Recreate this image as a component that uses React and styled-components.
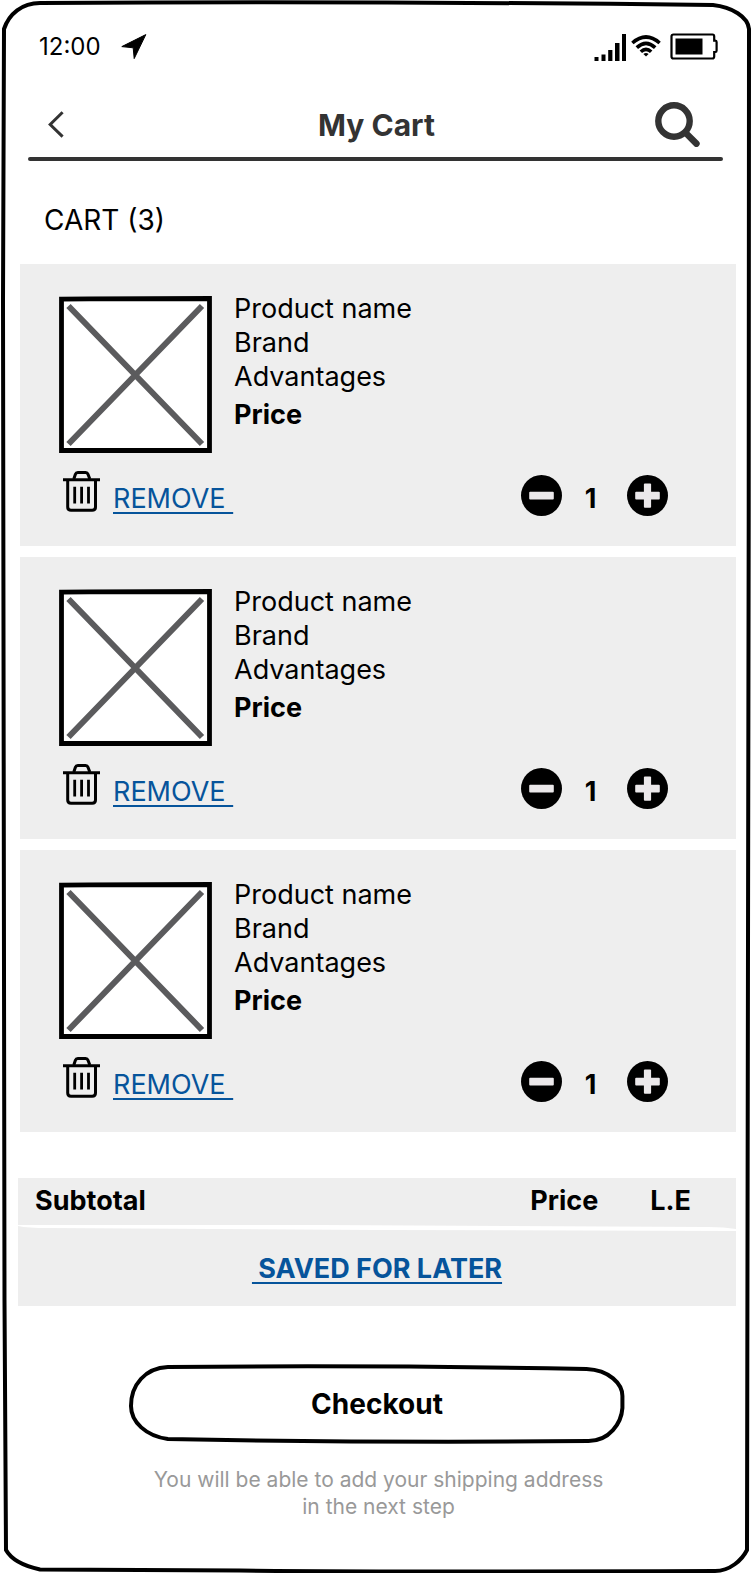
import React, { useState } from "react";
import styled, { createGlobalStyle } from "styled-components";

const ink = "#000";
const softInk = "#333";
const panel = "#eeeeee";
const linkBlue = "#06549b";

const GlobalStyle = createGlobalStyle`
  *, *::before, *::after { box-sizing: border-box; }
  body {
    margin: 0;
    background: #fff;
    color: ${ink};
    font-family: Inter, "Liberation Sans", sans-serif;
    font-size: 27px;
    line-height: 34px;
  }
  svg { display: block; flex: none; }
`;

const Phone = styled.div`
  position: relative;
  display: flex;
  flex-direction: column;
  min-height: 100vh;
  padding: 32px 17px 53px 18px;
`;

const Outline = styled.svg`
  position: absolute;
  inset: 0;
  width: 100%;
  height: 100%;
  overflow: visible;
  pointer-events: none;
  fill: none;
  stroke: ${ink};
  stroke-width: 4px;
  path { vector-effect: non-scaling-stroke; }
`;

const StatusBar = styled.div`
  display: flex;
  align-items: center;
  justify-content: space-between;
  height: 29px;
  padding: 0 18px 0 21px;
  font-size: 24px;
`;

const StatusGroup = styled.div`
  display: flex;
  align-items: center;
  gap: ${(p) => p.$gap}px;
`;

const Header = styled.header`
  display: grid;
  grid-template-columns: 1fr auto 1fr;
  align-items: center;
  margin: 36px 13px 0 10px;
  height: 54px;
  color: ${softInk};
`;

const Title = styled.h1`
  margin: 0;
  padding: 2px 0 0 2px;
  font-size: 30px;
  font-weight: 700;
`;

const IconButton = styled.button`
  display: block;
  padding: 0;
  border: 0;
  background: none;
  color: inherit;
  cursor: pointer;
`;

const BackButton = styled(IconButton)`
  justify-self: start;
  margin-left: 20px;
`;

const SearchButton = styled(IconButton)`
  justify-self: end;
  margin-right: 23px;
`;

const HeaderRule = styled.hr`
  width: auto;
  height: 4px;
  margin: 6px 13px 0 10px;
  border: 0;
  border-radius: 2px;
  background: ${softInk};
`;

const CartHeading = styled.h2`
  margin: 42px 0 27px 26px;
  font-size: 28px;
  font-weight: 400;
`;

const CartList = styled.ul`
  display: flex;
  flex-direction: column;
  gap: 11px;
  margin: 0 0 0 2px;
  padding: 0;
  list-style: none;
`;

const CartCard = styled.li`
  padding: 28px 68px 30px 39px;
  background: ${panel};
`;

const ProductRow = styled.div`
  display: flex;
  gap: 22px;
`;

const Details = styled.div`
  p { margin: 0; }
`;

const Price = styled.strong`
  display: block;
  margin-top: 4px;
  font-weight: 700;
`;

const Thumbnail = styled.svg`
  margin-top: 4px;
`;

const ActionRow = styled.div`
  display: flex;
  align-items: flex-end;
  justify-content: space-between;
  height: 45px;
  margin-top: 18px;
`;

const RemoveGroup = styled.div`
  display: flex;
  align-items: flex-end;
  gap: 13px;
  margin-left: 4px;
  svg { margin-bottom: 4px; }
`;

const TextLink = styled.a`
  color: ${linkBlue};
  font-weight: ${(p) => (p.$bold ? 700 : 400)};
  text-decoration: underline;
  text-decoration-thickness: 2px;
  text-underline-offset: 4px;
  text-decoration-skip-ink: none;
`;

const Stepper = styled.div`
  display: flex;
  align-items: flex-end;
`;

const Quantity = styled.output`
  width: 65px;
  padding-right: 8px;
  font-weight: 700;
  text-align: center;
`;

const Summary = styled.section`
  margin-top: 46px;
  background: ${panel};
`;

const SubtotalRow = styled.div`
  display: flex;
  align-items: center;
  gap: 52px;
  height: 46px;
  padding: 0 45px 0 17px;
  font-weight: 700;
`;

const SubtotalLabel = styled.span`
  flex: 1;
`;

const SummaryRule = styled.svg`
  width: 100%;
  height: 8px;
  fill: #fff;
`;

const SavedRow = styled.div`
  display: flex;
  align-items: center;
  justify-content: center;
  height: 74px;
`;

const CheckoutButton = styled.button`
  position: relative;
  align-self: center;
  width: 69%;
  height: 79px;
  margin-top: 59px;
  padding: 0 0 2px;
  border: 0;
  background: none;
  color: ${ink};
  font: 700 28px/34px Inter, "Liberation Sans", sans-serif;
  cursor: pointer;
`;

const HelperText = styled.p`
  margin: 22px 0 0;
  padding-left: 3px;
  color: #999;
  font-size: 21px;
  line-height: 27px;
  text-align: center;
`;

const LocationIcon = () => (
  <svg width="26" height="26" viewBox="0 0 26 26" aria-hidden="true">
    <path d="M24.8 0.6 L13.2 24.6 L12.2 13.8 L0.8 12.6 Z" fill={ink} stroke={ink} strokeLinejoin="round" />
  </svg>
);

const SignalIcon = () => (
  <svg width="33" height="28" viewBox="0 0 33 28" aria-hidden="true">
    <path d="M0.500 24h4v4h-4z M7.500 21.500h4v6.500h-4z M14.200 17h4.200v11h-4.200z M21 10h4.500v18h-4.500z M28 1h4v27h-4z" fill={ink} />
  </svg>
);

const WifiIcon = () => (
  <svg width="30" height="28" viewBox="0 0 30 28" fill="none" stroke={ink} strokeWidth="3.600" aria-hidden="true">
    <path d="M1.400 10 Q15 -2 28.600 10" />
    <path d="M5.800 14.600 Q15 6 24.200 14.600" />
    <path d="M9.800 18.800 Q15 14 20.200 18.800" />
    <path d="M12.400 21 Q15 19 17.600 21 L15 23.600 Z" fill={ink} stroke="none" />
  </svg>
);

const BatteryIcon = () => (
  <svg width="48" height="27" viewBox="0 0 48 27" aria-hidden="true">
    <path
      d="M3.500 1.500 H42.500 Q44.200 1.500 44.200 3.500 V7.600 H45.400 Q46.600 7.600 46.600 9 V17.500 Q46.600 19 45.400 19 H44.200 V23.500 Q44.200 25.500 42.200 25.500 H3.500 Q1.500 25.500 1.500 23.500 V3.500 Q1.500 1.500 3.500 1.500"
      fill="none"
      stroke={ink}
      strokeWidth="2.200"
    />
    <rect x="5.500" y="5.500" width="27" height="16" fill={ink} />
  </svg>
);

const BackIcon = () => (
  <svg width="16" height="27" viewBox="0 0 16 27" fill="none" stroke="currentColor" strokeWidth="3" aria-hidden="true">
    <path d="M14.600 1.200 L2.200 13.500 L14.600 25.600" />
  </svg>
);

const SearchIcon = () => (
  <svg width="45" height="45" viewBox="0 0 45 45" fill="none" stroke="currentColor" aria-hidden="true">
    <circle cx="19" cy="19" r="15.700" strokeWidth="6.400" />
    <path d="M30.800 31 L41.400 41.600" strokeWidth="6.600" strokeLinecap="round" />
  </svg>
);

const PicturePlaceholder = () => (
  <Thumbnail width="153" height="157" viewBox="0 0 153 157" role="img" aria-label="Product picture">
    <path d="M2.500 3.200 L30 2.800 L150.500 2.500 V154.500 H2.500 Z" fill="#fff" stroke={ink} strokeWidth="4.800" />
    <path d="M9.500 10 L143 148 M143 10 L9.500 148" stroke="#5b5b5d" strokeWidth="6" />
  </Thumbnail>
);

const TrashIcon = () => (
  <svg width="37" height="41" viewBox="0 0 37 41" fill="none" stroke={ink} strokeWidth="3" aria-hidden="true">
    <path d="M0 8.800 H37" />
    <path d="M10.800 8 L12.400 3.200 Q13 1.500 14.800 1.500 H22.600 Q24.400 1.500 25 3.200 L26.800 8" />
    <path d="M4.700 9 V36 Q4.700 39.300 8 39.300 H29.200 Q32.500 39.300 32.500 36 V9" />
    <path d="M11.700 15.700 V32.500 M18.600 15.700 V32.500 M25.500 15.700 V32.500" strokeWidth="2.800" />
  </svg>
);

const StepIcon = ({ plus }) => (
  <svg width="41" height="41" viewBox="0 0 41 41" aria-hidden="true">
    <circle cx="20.500" cy="20.500" r="20.500" fill={ink} />
    <rect x="8.200" y="16.800" width="24.600" height="7.600" rx="1" fill="#ebe8ea" />
    {plus && <rect x="16.900" y="8.400" width="7.200" height="24.400" rx="1" fill="#ebe8ea" />}
  </svg>
);

const PhoneOutline = () => (
  <Outline viewBox="0 0 753 1573" preserveAspectRatio="none" aria-hidden="true">
    <path d="M4 29 C9 14 22 3 40 3 Q377 1 713 5 C732 7 748 17 749 29 Q748 300 748.700 520 Q749 1200 747 1550 C742 1560 730 1571 715 1571 Q377 1572 240 1570.500 L40 1569.500 C24 1566 11 1559 6 1550 Q5 1400 4.500 1300 Q2 700 3 300 Z" />
  </Outline>
);

const ButtonOutline = () => (
  <Outline viewBox="0 0 497 79" preserveAspectRatio="none" aria-hidden="true">
    <path d="M39 2 Q250 0 459 4 C482 5 495 19 495 31 V43 C494 58 482 76 461 76 Q250 78 39 74 C17 71 2 57 2 41 C2 20 16 3 39 2 Z" />
  </Outline>
);

const products = [1, 2, 3].map((id) => ({
  id,
  name: "Product name",
  brand: "Brand",
  advantages: "Advantages",
  price: "Price",
}));

function CartItem({ product }) {
  const [quantity, setQuantity] = useState(1);
  return (
    <CartCard>
      <ProductRow>
        <PicturePlaceholder />
        <Details>
          <p>{product.name}</p>
          <p>{product.brand}</p>
          <p>{product.advantages}</p>
          <Price>{product.price}</Price>
        </Details>
      </ProductRow>
      <ActionRow>
        <RemoveGroup>
          <TrashIcon />
          <TextLink href="#remove">REMOVE&nbsp;</TextLink>
        </RemoveGroup>
        <Stepper>
          <IconButton type="button" aria-label="Decrease quantity" onClick={() => setQuantity(Math.max(1, quantity - 1))}>
            <StepIcon />
          </IconButton>
          <Quantity>{quantity}</Quantity>
          <IconButton type="button" aria-label="Increase quantity" onClick={() => setQuantity(quantity + 1)}>
            <StepIcon plus />
          </IconButton>
        </Stepper>
      </ActionRow>
    </CartCard>
  );
}

export default function App() {
  return (
    <>
      <GlobalStyle />
      <Phone>
        <PhoneOutline />
        <StatusBar>
          <StatusGroup $gap={20}>
            <span>12:00</span>
            <LocationIcon />
          </StatusGroup>
          <StatusGroup $gap={9}>
            <StatusGroup $gap={4}>
              <SignalIcon />
              <WifiIcon />
            </StatusGroup>
            <BatteryIcon />
          </StatusGroup>
        </StatusBar>
        <Header>
          <BackButton type="button" aria-label="Back">
            <BackIcon />
          </BackButton>
          <Title>My Cart</Title>
          <SearchButton type="button" aria-label="Search">
            <SearchIcon />
          </SearchButton>
        </Header>
        <HeaderRule />
        <main>
          <CartHeading>CART (3)</CartHeading>
          <CartList>
            {products.map((product) => (
              <CartItem key={product.id} product={product} />
            ))}
          </CartList>
          <Summary>
            <SubtotalRow>
              <SubtotalLabel>Subtotal</SubtotalLabel>
              <span>Price</span>
              <span>L.E</span>
            </SubtotalRow>
            <SummaryRule viewBox="0 0 718 8" preserveAspectRatio="none" aria-hidden="true">
              <path d="M0 1 H300 L690 3 Q706 3 718 5 V7 L360 6 L30 4 Q10 4 0 2 Z" />
            </SummaryRule>
            <SavedRow>
              <TextLink href="#saved" $bold>
                &nbsp;SAVED FOR LATER
              </TextLink>
            </SavedRow>
          </Summary>
        </main>
        <CheckoutButton type="button">
          <ButtonOutline />
          Checkout
        </CheckoutButton>
        <HelperText>
          You will be able to add your shipping address
          <br />
          in the next step
        </HelperText>
      </Phone>
    </>
  );
}
